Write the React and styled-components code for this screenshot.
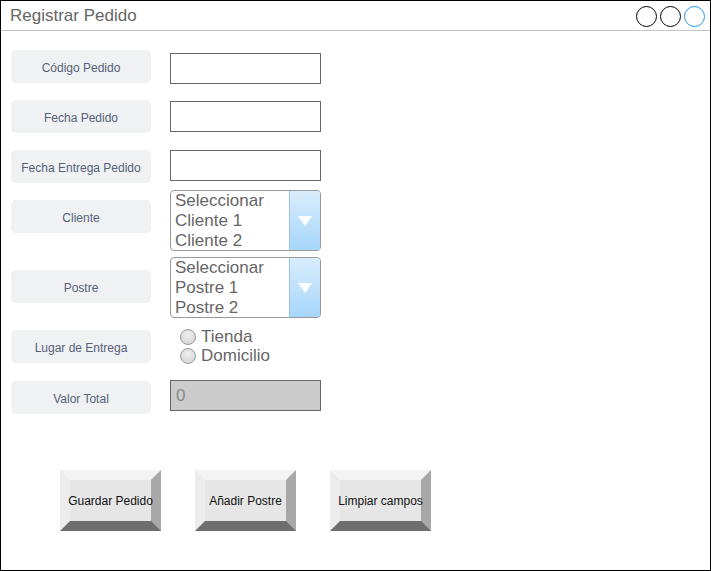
import React from "react";
import styled, { createGlobalStyle } from "styled-components";

const Global = createGlobalStyle`
  html, body { margin: 0; padding: 0; background: #fff; }
  body { font-family: "Liberation Sans", Arial, sans-serif; }
  * { box-sizing: border-box; }
`;

const Window = styled.div`
  width: 711px;
  height: 571px;
  border: 1px solid #000;
  background: #fff;
  display: flex;
  flex-direction: column;
`;

const TitleBar = styled.div`
  height: 30px;
  border-bottom: 1px solid #c4c4c4;
  display: flex;
  align-items: center;
  justify-content: space-between;
  padding: 0 5px 0 9px;
`;

const Title = styled.div`
  font-size: 17px;
  color: #666;
  line-height: 20px;
  padding-top: 1px;
`;

const Dots = styled.div`
  display: flex;
  gap: 3px;
  margin-top: 1px;
`;

const Dot = styled.div`
  width: 21px;
  height: 21px;
  border-radius: 50%;
  border: 1.3px solid ${(p) => (p.$active ? "#2196f3" : "#000")};
`;

const Form = styled.div`
  display: flex;
  flex-direction: column;
  padding: 19px 0 0 10px;
`;

const Row = styled.div`
  display: flex;
  align-items: flex-start;
  gap: 19px;
  margin-top: ${(p) => p.$top}px;
`;

const Label = styled.div`
  width: 140px;
  height: 33px;
  flex: none;
  margin-top: ${(p) => p.$offset || 0}px;
  border-radius: 5px;
  background: #f0f1f3;
  color: #56617a;
  font-size: 12px;
  padding-top: 2px;
  display: flex;
  align-items: center;
  justify-content: center;
  white-space: nowrap;
`;

const TextBox = styled.div`
  width: 151px;
  height: 31px;
  margin-top: ${(p) => p.$offset || 0}px;
  border: 1px solid #666;
  background: ${(p) => (p.$disabled ? "#cccccc" : "#fff")};
  color: #888;
  font-size: 17px;
  padding-left: 5px;
  display: flex;
  align-items: center;
`;

const Select = styled.div`
  width: 151px;
  height: 61px;
  border: 1px solid #999;
  border-radius: 4px;
  display: flex;
  overflow: hidden;
  background: #fff;
`;

const Options = styled.div`
  flex: 1;
  padding: 0 0 0 4px;
  display: flex;
  flex-direction: column;
  justify-content: center;
`;

const Option = styled.div`
  font-size: 17px;
  line-height: 20px;
  color: #666;
  white-space: nowrap;
`;

const Arrow = styled.div`
  width: 31px;
  flex: none;
  border-left: 1px solid #9ec3e6;
  background: linear-gradient(to bottom, #d9edfd, #a6d6fb);
  display: flex;
  align-items: center;
  justify-content: center;
`;

const Radios = styled.div`
  display: flex;
  flex-direction: column;
  padding-left: 10px;
`;

const RadioItem = styled.div`
  display: flex;
  align-items: center;
  gap: 5px;
  height: 19px;
  font-size: 17px;
  color: #666;
`;

const RadioCircle = styled.span`
  width: 16px;
  height: 16px;
  border-radius: 50%;
  border: 1px solid #999;
  background: radial-gradient(circle at 50% 35%, #f0f0f0, #d0d0d0);
  flex: none;
`;

const Buttons = styled.div`
  display: flex;
  gap: 34px;
  padding-left: 59px;
  margin-top: 56px;
`;

const BevelButton = styled.div`
  width: 101px;
  height: 61px;
  border-style: solid;
  border-width: 10px;
  border-top-color: #f3f3f3;
  border-left-color: #ececec;
  border-right-color: #a8a8a8;
  border-bottom-color: #6e6e6e;
  background: #e6e6e6;
  display: flex;
  align-items: center;
  justify-content: center;
  white-space: nowrap;
  font-size: 12px;
  color: #111;
  padding-top: 1px;
`;

const Triangle = () => (
  <svg width="14" height="10" viewBox="0 0 14 10">
    <polygon points="0,0 14,0 7,10" fill="#fff" />
  </svg>
);

export default function App() {
  return (
    <>
      <Global />
      <Window>
        <TitleBar>
          <Title>Registrar Pedido</Title>
          <Dots>
            <Dot />
            <Dot />
            <Dot $active />
          </Dots>
        </TitleBar>
        <Form>
          <Row $top={0}>
            <Label>Código Pedido</Label>
            <TextBox $offset={3} />
          </Row>
          <Row $top={16}>
            <Label>Fecha Pedido</Label>
            <TextBox $offset={1} />
          </Row>
          <Row $top={17}>
            <Label>Fecha Entrega Pedido</Label>
            <TextBox />
          </Row>
          <Row $top={7}>
            <Label $offset={10}>Cliente</Label>
            <Select>
              <Options>
                <Option>Seleccionar</Option>
                <Option>Cliente 1</Option>
                <Option>Cliente 2</Option>
              </Options>
              <Arrow>
                <Triangle />
              </Arrow>
            </Select>
          </Row>
          <Row $top={6}>
            <Label $offset={13}>Postre</Label>
            <Select>
              <Options>
                <Option>Seleccionar</Option>
                <Option>Postre 1</Option>
                <Option>Postre 2</Option>
              </Options>
              <Arrow>
                <Triangle />
              </Arrow>
            </Select>
          </Row>
          <Row $top={9}>
            <Label $offset={3}>Lugar de Entrega</Label>
            <Radios>
              <RadioItem>
                <RadioCircle />
                Tienda
              </RadioItem>
              <RadioItem>
                <RadioCircle />
                Domicilio
              </RadioItem>
            </Radios>
          </Row>
          <Row $top={15}>
            <Label $offset={1}>Valor Total</Label>
            <TextBox $disabled>0</TextBox>
          </Row>
        </Form>
        <Buttons>
          <BevelButton>Guardar Pedido</BevelButton>
          <BevelButton>Añadir Postre</BevelButton>
          <BevelButton>Limpiar campos</BevelButton>
        </Buttons>
      </Window>
    </>
  );
}
